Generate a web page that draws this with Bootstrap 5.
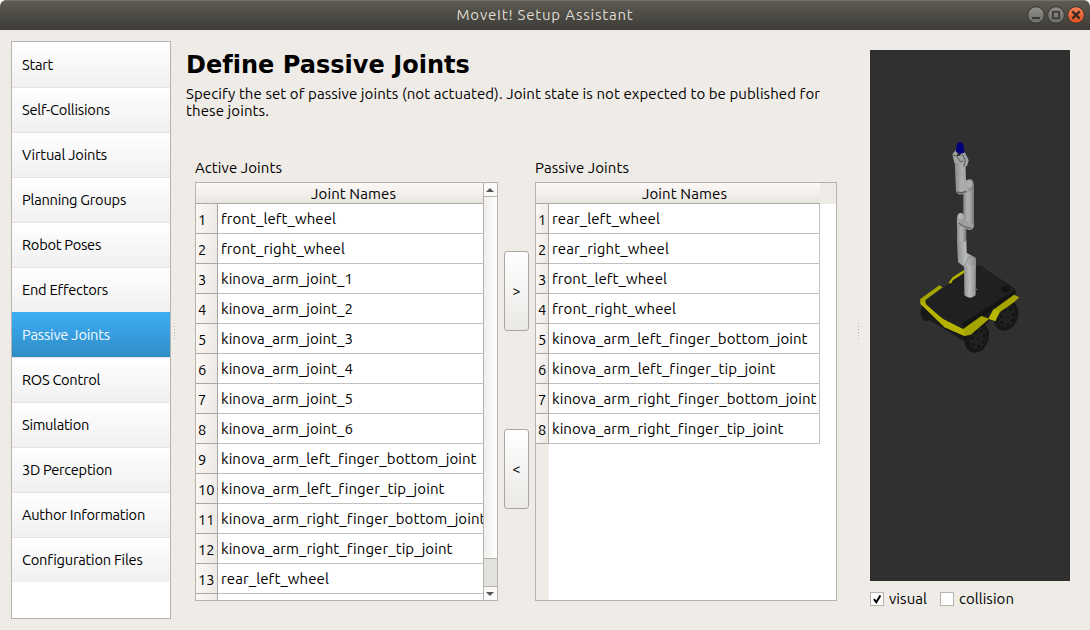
<!DOCTYPE html>
<html lang="en">
<head>
<meta charset="utf-8">
<title>MoveIt! Setup Assistant</title>
<link href="https://cdn.jsdelivr.net/npm/bootstrap@5.3.0/dist/css/bootstrap.min.css" rel="stylesheet">
<style>
html{background:#fff}
body{width:1090px;height:630px;overflow:hidden;font-family:Ubuntu,"Noto Sans",sans-serif;font-size:15px;line-height:17px;color:#000;background:#efebe7;border-radius:6px 6px 0 0}
.fit{display:inline-block;white-space:nowrap}
.titlebar{height:30px;background:linear-gradient(#5d5b53,#3d3c37);border-radius:6px 6px 0 0;color:#dfdbd2;padding-bottom:1px;box-shadow:inset 0 1px #74726a}
.wbtns{position:absolute;right:5px;top:6px}
.side{width:160px;height:578px;margin:11px 0 0 11px;border:1px solid #b6b2ae;background:#fff}
.side .list-group-item{height:45px;padding:0 0 0 10px;border:0;border-top:1px solid #e6e4e1;border-radius:0;background:linear-gradient(#fff,#f0f0f0);color:#000;line-height:43px;font-size:14.67px}
.side .list-group-item:first-child{border-top-color:#fff}
.side .list-group-item.active{background:linear-gradient(#3daef5,#308cc6);color:#f4faff;border-top-color:#3daef5;margin:0}
.grip{width:1px;height:17px;background:repeating-linear-gradient(#b5b1ad 0 1px,transparent 1px 3px)}
.main-pane{width:684px;padding-left:12px}
h1{font:bold 24px/28px "DejaVu Sans",sans-serif;margin:21px 0 0 0;color:#000}
.desc{margin:6px 0 0 0;height:34px}
.cap{height:17px;margin-bottom:6px}
.tbl{height:419px;border:1px solid #b6b2ae;background:#fff;overflow:hidden}
.hd{height:21px;line-height:22px;border-bottom:1px solid #aaa6a2;background:linear-gradient(#fbf8f6,#e9e6e2);text-align:center}
.rw{height:30px}
.no{height:30px;flex:none;line-height:31px;padding-left:2px;border-right:1px solid #aaa6a2;border-bottom:1px solid #aaa6a2;background:linear-gradient(100deg,#fbf8f6,#ebe8e4);font-size:14.67px}
.ce{height:30px;line-height:29px;padding-left:3px;border-bottom:1px solid #c0c0c0;overflow:hidden;white-space:nowrap}
.act .no{width:22px}.pas .no{width:13px;padding-left:2px}
.pas .ce{border-right:1px solid #c0c0c0}
.sb{width:14px;border-left:1px solid #b6b2ae;background:#e3e1de}
.ar{height:14px;background:#faf9f8;display:flex;align-items:center;justify-content:center}
.ar svg{margin-right:1px}
.thumb{height:362px;background:linear-gradient(90deg,#efeeec,#fff);border:solid #b6b2ae;border-width:1px 0}
.mv{width:25px;height:80px;padding:0;border:1px solid #aaa6a2;border-radius:3px;background:linear-gradient(#fff,#ebe9e6);font-size:14px;line-height:78px;color:#000}
.mv:hover{background:#fff}
.cb{width:14px;height:14px;border:1px solid #b6b2ae;background:#fff;flex:none}
</style>
</head>
<body>
<header class="titlebar position-relative d-flex justify-content-center align-items-center">
  <span class="fit" data-w="177">MoveIt! Setup Assistant</span>
  <svg class="wbtns" width="60" height="18" viewBox="1025 6 60 18">
    <defs><linearGradient id="wg" x2="0" y2="1"><stop stop-color="#92908a"/><stop offset="1" stop-color="#6d6b65"/></linearGradient><linearGradient id="wo" x2="0" y2="1"><stop stop-color="#f67c54"/><stop offset="1" stop-color="#e25220"/></linearGradient></defs>
    <g stroke="#35342f"><circle cx="1036" cy="15" r="8.3" fill="url(#wg)"/><circle cx="1056" cy="15" r="8.3" fill="url(#wg)"/><circle cx="1076" cy="15" r="8.3" fill="url(#wo)"/></g>
    <path d="M1032 18h8" stroke="#3b3a35" stroke-width="2"/><rect x="1052.8" y="11.8" width="6.4" height="6.4" fill="none" stroke="#3b3a35" stroke-width="1.8"/><path d="M1072.3 11.3l7.4 7.4m0-7.4l-7.4 7.4" stroke="#3b2a20" stroke-width="2.4"/>
  </svg>
</header>
<div class="d-flex">
  <nav class="side list-group rounded-0" id="nav"></nav>
  <div class="d-flex align-items-center" style="height:603px"><div class="grip" style="margin-left:3px"></div></div>
  <main class="main-pane d-flex flex-column" style="margin-left:-1px">
    <h1><span class="fit" data-w="283">Define Passive Joints</span></h1>
    <div class="desc"><span class="fit" data-w="634">Specify the set of passive joints (not actuated). Joint state is not expected to be published for</span><br><span class="fit" data-w="83">these joints.</span></div>
    <div class="d-flex" style="margin:40px 0 0 9px">
      <section style="width:303px">
        <div class="cap"><span class="fit" data-w="87">Active Joints</span></div>
        <div class="tbl act d-flex">
          <div class="flex-fill overflow-hidden"><div class="hd" style="padding-left:28px"><span class="fit" data-w="85">Joint Names</span></div><div id="active"></div></div>
          <div class="sb"><div class="ar" style="height:13px"><svg width="8" height="4"><path d="M0 4L4 0l4 4z" fill="#555"/></svg></div><div class="thumb" style="height:363px"></div><div style="height:27px"></div><div class="ar" style="border-top:1px solid #b6b2ae"><svg width="8" height="4"><path d="M0 0h8L4 4z" fill="#555"/></svg></div></div>
        </div>
      </section>
      <div class="d-flex flex-column" style="padding:92px 6px 0;gap:98px">
        <button class="btn mv">&gt;</button><button class="btn mv">&lt;</button>
      </div>
      <section style="width:302px">
        <div class="cap"><span class="fit" data-w="94">Passive Joints</span></div>
        <div class="tbl pas">
          <div class="d-flex" style="height:21px;background:#efebe7"><div class="hd" style="width:284px;padding-left:13px"><span class="fit" data-w="85">Joint Names</span></div></div>
          <div id="passive" style="width:284px"></div>
          <div style="width:13px;height:160px;background:#efebe7"></div>
        </div>
      </section>
    </div>
  </main>
  <div class="d-flex align-items-center" style="height:603px"><div class="grip"></div></div>
  <aside style="margin:20px 0 0 11px;width:200px">
    <svg class="d-block" width="200" height="531" viewBox="870 50 200 531">
      <defs>
        <linearGradient id="t"><stop stop-color="#858786"/><stop offset=".35" stop-color="#acafae"/><stop offset=".65" stop-color="#a5a8a7"/><stop offset="1" stop-color="#747675"/></linearGradient>
        <linearGradient id="t2"><stop stop-color="#8e9190"/><stop offset=".45" stop-color="#b8bbba"/><stop offset="1" stop-color="#8c8f8e"/></linearGradient>
      </defs>
      <path fill="#303030" d="M870 50h200v531H870z"/>
      <!-- mobile base -->
      <g transform="translate(900 240) scale(.33333)">
        <ellipse cx="80" cy="217" rx="18" ry="26" fill="#181818"/>
        <path d="M68 190L80 235 200 308 265 245 345 180 345 150 230 78z" fill="#1a1a1a"/>
        <g transform="rotate(18 318 226)"><ellipse cx="318" cy="226" rx="36" ry="47" fill="#171717"/><ellipse cx="322" cy="228" rx="24" ry="33" fill="#212121"/><ellipse cx="323" cy="229" rx="17" ry="25" fill="none" stroke="#131313" stroke-width="7" stroke-dasharray="10 9"/><circle cx="324" cy="230" r="4" fill="#131313"/></g>
        <g transform="rotate(18 230 292)"><ellipse cx="230" cy="292" rx="36" ry="47" fill="#171717"/><ellipse cx="235" cy="293" rx="24" ry="33" fill="#212121"/><ellipse cx="236" cy="294" rx="17" ry="25" fill="none" stroke="#131313" stroke-width="7" stroke-dasharray="10 9"/><circle cx="237" cy="295" r="4" fill="#131313"/></g>
        <path d="M75 183L134 140 192 100 230 77 346 150 330 163 265 225 248 228 188 270 125 240 80 196z" fill="#202020"/>
        <path d="M188 250L325 163 346 150 348 158 250 230 190 272z" fill="#141414"/>
        <path d="M75 183L188 250" stroke="#1b1b1b" stroke-width="2"/>
        <ellipse cx="317" cy="147" rx="13" ry="10" fill="#131313"/>
        <path d="M237 77L345 148" stroke="#101010" stroke-width="3"/>
        <path d="M60 178L118 136 128 142 76 180 78 192 122 233 188 268 244 228 268 236 212 284 194 288 134 262 62 192z" fill="#a5a500"/>
        <path d="M62 182L72 190 130 238 190 268 194 288 134 262 62 192z" fill="#b4b400"/>
        <path d="M145 130L158 112 192 90 192 99 158 121 154 130z" fill="#b5b500"/>
        <path d="M265 236L284 206 342 164 358 172 340 188 300 216 286 243z" fill="#a5a500"/>
        <path d="M265 236L280 208 300 212 286 243z" fill="#b8b804"/>
        <path d="M192 70L228 62 227 166Q210 180 193 166z" fill="url(#t2)"/>
        <path d="M171 0H199L200 38 228 54 226 76 192 80 174 66z" fill="url(#t2)"/>
        <path d="M175 65Q190 80 196 76L204 54Q214 45 225 52" fill="none" stroke="#7c7f7e" stroke-width="2"/>
        <circle cx="205" cy="127" r="1.5" fill="#777"/><circle cx="230" cy="148" r="2" fill="#999"/>
      </g>
      <!-- arm and gripper -->
      <g transform="translate(900 130) scale(.33333)">
        <path d="M171 270H199V335H171z" fill="url(#t)"/>
        <path d="M190 185Q190 170 206 170L222 162V284Q222 300 207 299L190 285z" fill="url(#t)"/>
        <path d="M171 280Q168 248 184 248 192 250 193 270L222 285Q220 300 205 299L172 285z" fill="#9da09f"/>
        <path d="M176 279Q192 293 215 295" stroke="#6c6e6d" stroke-width="4" fill="none"/>
        <ellipse cx="182" cy="259" rx="9" ry="9" fill="#b0b3b2"/>
        <path d="M164 95L196 92 198 152Q205 147 213 148 221 151 221 162V174Q200 196 175 193L168 185z" fill="url(#t)"/>
        <path d="M170 186Q185 192 199 184" stroke="#606261" stroke-width="5" fill="none"/>
        <ellipse cx="208" cy="162" rx="10" ry="11" fill="#aaadac"/>
        <path d="M165 132Q180 138 198 131" stroke="#828584" fill="none"/>
        <path d="M163 98L157 73 168 60 174 64 170 78 181 77 184 65 194 65 206 91 201 108 193 112 184 100z" fill="#a1a3a2"/>
        <path d="M169 77L182 96 189 92M187 72L196 91 191 110M159 75L168 78" stroke="#505251" stroke-width="3" fill="none"/>
        <path d="M168 66L170 42 179 35 189 41 194 68 181 71z" fill="#00007c"/>
      </g>
    </svg>
    <div class="d-flex align-items-center" style="height:17px;margin-top:9px">
      <span class="cb d-flex"><svg width="12" height="12"><path d="M3 6.2L5.3 9.3 9.4 2.5" fill="none" stroke="#000" stroke-width="2"/></svg></span>
      <span class="fit" data-w="38" style="margin-left:5px">visual</span>
      <span class="cb" style="margin-left:13px"></span>
      <span class="fit" data-w="55" style="margin-left:5px">collision</span>
    </div>
  </aside>
</div>
<script src="https://cdn.jsdelivr.net/npm/bootstrap@5.3.0/dist/js/bootstrap.bundle.min.js"></script>
<script>
const pages=[["Start",31],["Self-Collisions",88],["Virtual Joints",85],["Planning Groups",104],["Robot Poses",79],["End Effectors",86],["Passive Joints",88],["ROS Control",78],["Simulation",67],["3D Perception",90],["Author Information",123],["Configuration Files",120]];
document.getElementById("nav").innerHTML=pages.map(([t,w])=>`<a class="list-group-item${t=="Passive Joints"?" active":""}"><span class="fit" data-w="${w}">${t}</span></a>`).join("");
const L=["front_left_wheel",115],R=["front_right_wheel",124],RL=["rear_left_wheel",108],RR=["rear_right_wheel",117];
const F=[["kinova_arm_left_finger_bottom_joint",255],["kinova_arm_left_finger_tip_joint",223],["kinova_arm_right_finger_bottom_joint",264],["kinova_arm_right_finger_tip_joint",231]];
const rows=a=>a.map(([t,w],i)=>`<div class="rw d-flex"><div class="no">${i+1}</div><div class="ce flex-fill">${t?`<span class="fit" data-w="${w}">${t}</span>`:""}</div></div>`).join("");
document.getElementById("active").innerHTML=rows([L,R,...[1,2,3,4,5,6].map(n=>["kinova_arm_joint_"+n,132]),...F,RL]) + '<div class="rw d-flex"><div class="no"></div><div class="ce flex-fill"></div></div>';
document.getElementById("passive").innerHTML=rows([RL,RR,L,R,...F]);
// Track each label to its intended width whichever font is installed
document.querySelectorAll(".fit").forEach(e=>{
  const d=(e.dataset.w-e.getBoundingClientRect().width)/e.textContent.length;
  e.style.letterSpacing=d.toFixed(3)+"px";
});
</script>
</body>
</html>
